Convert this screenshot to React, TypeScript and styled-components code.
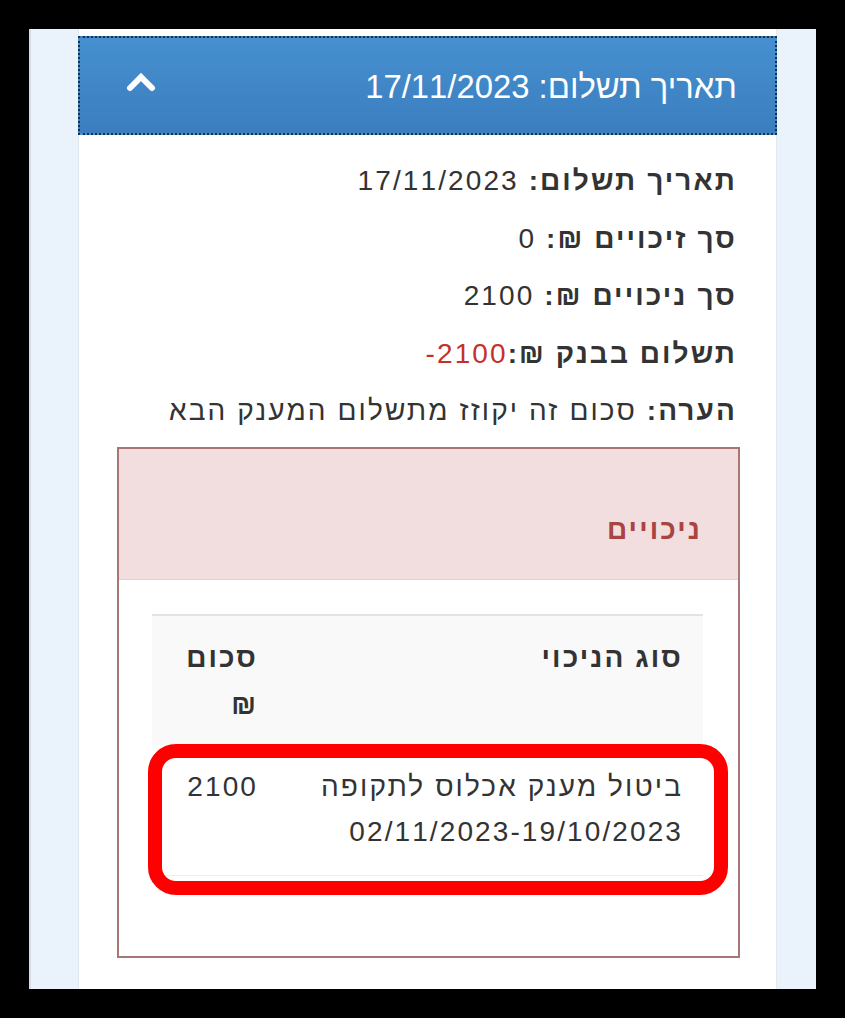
import React from 'react'
import styled, { createGlobalStyle } from 'styled-components'

const GlobalStyle = createGlobalStyle`
  html, body {
    margin: 0;
    padding: 0;
    background: #000;
  }
  body {
    font-family: 'Liberation Sans', Arimo, 'DejaVu Sans', Arial, sans-serif;
  }
`

type Deduction = {
  kind: string
  amount: string
}

const deductions: Deduction[] = [
  { kind: 'ביטול מענק אכלוס לתקופה 02/11/2023-19/10/2023', amount: '2100' },
]

const ChevronUp = () => (
  <svg width="30" height="20" viewBox="0 0 30 20" aria-hidden="true">
    <polyline
      points="4,16 15,5 26,16"
      fill="none"
      stroke="#fff"
      strokeWidth="6"
      strokeLinecap="round"
      strokeLinejoin="miter"
    />
  </svg>
)

export default function App() {
  return (
    <>
      <GlobalStyle />
      <Screen dir="rtl">
        <Panel>
          <PanelHeader>
            <HeaderTitle>תאריך תשלום: 17/11/2023</HeaderTitle>
            <ToggleButton type="button" aria-label="סגור">
              <ChevronUp />
            </ToggleButton>
          </PanelHeader>
          <PanelBody>
            <InfoLine>
              <strong>תאריך תשלום:</strong> 17/11/2023
            </InfoLine>
            <InfoLine>
              <strong>סך זיכויים ₪:</strong> 0
            </InfoLine>
            <InfoLine>
              <strong>סך ניכויים ₪:</strong> 2100
            </InfoLine>
            <InfoLine>
              <strong>תשלום בבנק ₪:</strong>
              <Negative dir="ltr">-2100</Negative>
            </InfoLine>
            <InfoLine>
              <strong>הערה:</strong> סכום זה יקוזז מתשלום המענק הבא
            </InfoLine>

            <DangerBox>
              <DangerHeading>
                <DangerTitle>ניכויים</DangerTitle>
              </DangerHeading>
              <DangerBody>
                <Table>
                  <HeadRow>
                    <HeadCell>סוג הניכוי</HeadCell>
                    <HeadCell>סכום ₪</HeadCell>
                  </HeadRow>
                  {deductions.map((d) => (
                    <Row key={d.kind}>
                      <Cell>{d.kind}</Cell>
                      <Cell>{d.amount}</Cell>
                      <Highlight />
                    </Row>
                  ))}
                </Table>
              </DangerBody>
            </DangerBox>
          </PanelBody>
        </Panel>
      </Screen>
    </>
  )
}

const Screen = styled.div`
  margin: 29px 0 0 29px;
  width: 787px;
  height: 960px;
  box-sizing: border-box;
  background: #eaf2fb;
  border-left: 2px solid #d6dde5;
  padding: 0 40px 0 48px;
  display: flex;
  overflow: hidden;
`

const Panel = styled.div`
  flex: 1;
  background: #fff;
  padding-top: 7px;
  box-shadow: -1px 0 0 #dfe6ee, 1px 0 0 #e3e9ef;
`

const PanelHeader = styled.div`
  height: 99px;
  box-sizing: border-box;
  margin: 0 -1px;
  border: 2px dotted #1b2f45;
  background: linear-gradient(to bottom, #4690d0 0%, #3b7ebf 100%);
  display: flex;
  align-items: center;
  justify-content: space-between;
  padding: 0 38px 0 46px;
`

const HeaderTitle = styled.h4`
  margin: 2px 0 0;
  font-weight: normal;
  font-size: 32.8px;
  color: #fff;
`

const ToggleButton = styled.button`
  border: none;
  background: transparent;
  padding: 0;
  margin-top: -8px;
  display: flex;
  cursor: pointer;
`

const PanelBody = styled.div`
  padding: 17px 39px 0 38px;
  color: #333;
  font-size: 28px;
  letter-spacing: 2.1px;
`

const InfoLine = styled.div`
  line-height: 57.5px;
  padding-right: 0;

  strong {
    font-weight: bold;
  }
`

const Negative = styled.span`
  color: #c6302b;
`

const DangerBox = styled.div`
  margin: 7px -3px 0 0;
  border: 2px solid #a97676;
`

const DangerHeading = styled.div`
  height: 131px;
  box-sizing: border-box;
  background: #f2dede;
  border-bottom: 1px solid #ebcccc;
  padding: 61px 36px 0;
`

const DangerTitle = styled.h3`
  margin: 0;
  font-size: 28px;
  line-height: 40px;
  font-weight: bold;
  color: #a94442;
`

const DangerBody = styled.div`
  padding: 34px 35px 80px 33px;
`

const Table = styled.div`
  border-top: 2px solid #e3e3e3;
`

const HeadRow = styled.div`
  display: grid;
  grid-template-columns: 1fr 126px;
  background: #f9f9f9;
`

const Row = styled.div`
  position: relative;
  display: grid;
  grid-template-columns: 1fr 126px;
  border-bottom: 1px solid #eee;
`

const HeadCell = styled.div`
  padding: 18px 20px 17px;
  line-height: 47px;
  font-weight: bold;
`

const Cell = styled.div`
  padding: 19px 20px 21px;
  line-height: 45px;
`

/* red marker drawn around the row */
const Highlight = styled.div`
  position: absolute;
  top: -1px;
  bottom: -20px;
  left: -4px;
  right: -25px;
  border: 14px solid #ff0000;
  border-radius: 28px;
  pointer-events: none;
`
